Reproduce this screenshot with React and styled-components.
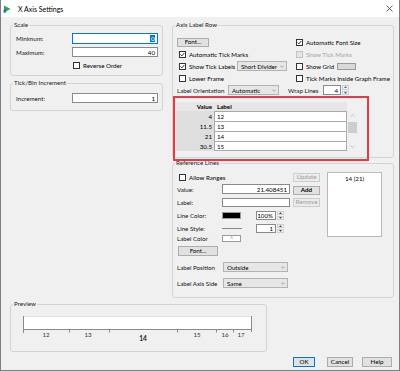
import React from "react";
import styled, { createGlobalStyle } from "styled-components";

const GlobalStyle = createGlobalStyle`
  html, body { margin: 0; padding: 0; background: #f0f0f0; }
  body { font-family: Lato, "Noto Sans", "Liberation Sans", sans-serif; font-size: 6.2px; color: #000; }
  #root { width: 400px; height: 371px; }
  *, *::before, *::after { box-sizing: border-box; }
`;

const Window = styled.div`
  position: relative;
  width: 400px;
  height: 371px;
  display: flex;
  flex-direction: column;
  background: #f0f0f0;
  border: 1px solid #7f7f7f;
  border-top: none;
  overflow: hidden;
`;

const TitleBar = styled.div`
  flex: none;
  height: 17px;
  background: #fff;
  display: flex;
  align-items: center;
  padding: 0 6px 0 2px;
`;

const TitleText = styled.span`
  margin-left: 7px;
  font-size: 7px;
  flex: 1;
`;

const Body = styled.div`
  flex: 1;
  display: flex;
  flex-direction: column;
  padding: 4px 5px 0 9px;
`;

const TopRow = styled.div`
  display: flex;
  align-items: flex-start;
  gap: 9px;
`;

const Column = styled.div`
  width: ${(p) => p.$w}px;
  display: flex;
  flex-direction: column;
  gap: ${(p) => p.$gap}px;
`;

const Group = styled.fieldset`
  margin: 0;
  min-width: 0;
  width: ${(p) => (p.$w ? `${p.$w}px` : "auto")};
  margin-top: ${(p) => p.$mt || 0}px;
  border: 1px solid #d4d4d4;
  border-radius: 3px;
  padding: ${(p) => `${p.$pt}px ${p.$pr}px ${p.$pb}px ${p.$pl}px`};
`;

const Legend = styled.legend`
  padding: 0 1px;
  margin-left: ${(p) => 2 - p.$pl}px;
  height: 8px;
  line-height: 8px;
  color: #1a1a1a;
`;

function GroupBox({ title, pt, pr, pb, pl, w, mt, children }) {
  return (
    <Group $pt={pt} $pr={pr} $pb={pb} $pl={pl} $w={w} $mt={mt}>
      <Legend $pl={pl}>{title}</Legend>
      {children}
    </Group>
  );
}

const Row = styled.div`
  display: flex;
  align-items: center;
  height: ${(p) => p.$h ?? 10}px;
  margin-top: ${(p) => p.$mt ?? 0}px;
  margin-left: ${(p) => p.$ml ?? 0}px;
`;

const FieldLabel = styled.span`
  flex: none;
  width: ${(p) => p.$w}px;
  margin-left: ${(p) => p.$ml ?? 0}px;
  white-space: nowrap;
  color: #111;
`;

const TextBox = styled.div`
  flex: none;
  width: ${(p) => p.$w}px;
  height: 100%;
  margin-left: ${(p) => p.$ml ?? 0}px;
  background: #fff;
  border: 1px solid ${(p) => (p.$focus ? "#0078d7" : "#8a8a8a")};
  display: flex;
  align-items: center;
  justify-content: ${(p) => (p.$left ? "flex-start" : "flex-end")};
  padding: 0 2px;
  white-space: nowrap;
`;

const Selected = styled.span`
  background: #0078d7;
  color: #fff;
  padding: 0 0.5px;
  line-height: 7px;
`;

const Box = styled.span`
  flex: none;
  width: 7px;
  height: 7px;
  border: 1px solid ${(p) => (p.$disabled ? "#c2c2c2" : "#333")};
  background: ${(p) => (p.$disabled ? "#e4e4e4" : "#fff")};
  display: flex;
  align-items: center;
  justify-content: center;
`;

const CheckWrap = styled.span`
  display: flex;
  align-items: center;
  gap: 3px;
  flex: none;
  width: ${(p) => (p.$w ? `${p.$w}px` : "auto")};
  margin-left: ${(p) => p.$ml ?? 0}px;
  color: ${(p) => (p.$disabled ? "#a3a3a3" : "#000")};
  white-space: nowrap;
`;

function Check({ checked, disabled, children, ml, w }) {
  return (
    <CheckWrap $disabled={disabled} $ml={ml} $w={w}>
      <Box $disabled={disabled}>
        {checked && (
          <svg width="5" height="5" viewBox="0 0 5 5">
            <path d="M0.6 2.6 L1.9 3.9 L4.4 0.9" fill="none" stroke="#222" strokeWidth="0.9" />
          </svg>
        )}
      </Box>
      {children}
    </CheckWrap>
  );
}

const Btn = styled.button`
  flex: none;
  width: ${(p) => p.$w}px;
  height: ${(p) => p.$h ?? 9}px;
  margin: 0;
  margin-left: ${(p) => p.$ml ?? 0}px;
  margin-top: ${(p) => p.$mt ?? 0}px;
  padding: 0;
  font: inherit;
  font-weight: ${(p) => (p.$bold ? 700 : 400)};
  line-height: 1;
  background: ${(p) => (p.$disabled ? "#ececec" : "#e1e1e1")};
  border: 1px solid ${(p) => (p.$default ? "#0078d7" : p.$disabled ? "#cdcdcd" : "#adadad")};
  color: ${(p) => (p.$disabled ? "#9e9e9e" : "#000")};
  display: flex;
  align-items: center;
  justify-content: center;
`;

const SelectBox = styled.div`
  flex: none;
  width: ${(p) => p.$w}px;
  height: ${(p) => p.$h ?? 10}px;
  margin-left: ${(p) => p.$ml ?? 0}px;
  background: #e6e6e6;
  border: 1px solid #b3b3b3;
  display: flex;
  align-items: center;
  justify-content: space-between;
  padding: 0 2px 0 3px;
  white-space: nowrap;
`;

function Select({ w, h, ml, children }) {
  return (
    <SelectBox $w={w} $h={h} $ml={ml}>
      <span>{children}</span>
      <svg width="4" height="3" viewBox="0 0 4 3">
        <path d="M0.3 0.6 L2 2.3 L3.7 0.6" fill="none" stroke="#777" strokeWidth="0.6" />
      </svg>
    </SelectBox>
  );
}

const SpinCol = styled.div`
  flex: none;
  width: 7px;
  height: 100%;
  display: flex;
  flex-direction: column;
  gap: 1px;
  margin-left: 1px;
`;

const SpinHalf = styled.div`
  flex: 1;
  background: #f4f4f4;
  border: 1px solid #cfcfcf;
  display: flex;
  align-items: center;
  justify-content: center;
`;

function Spinner({ color = "#555" }) {
  return (
    <SpinCol>
      <SpinHalf>
        <svg width="3" height="2" viewBox="0 0 3 2">
          <path d="M0 2 L1.5 0 L3 2 Z" fill={color} />
        </svg>
      </SpinHalf>
      <SpinHalf>
        <svg width="3" height="2" viewBox="0 0 3 2">
          <path d="M0 0 L1.5 2 L3 0 Z" fill={color} />
        </svg>
      </SpinHalf>
    </SpinCol>
  );
}

const Swatch = styled.div`
  flex: none;
  width: 19px;
  height: 7px;
  background: ${(p) => p.$bg};
  border: 1px solid #9a9a9a;
  margin-left: ${(p) => p.$ml ?? 0}px;
  display: flex;
  align-items: center;
  justify-content: center;
  color: #b0b0b0;
  font-size: 5.5px;
  line-height: 1;
`;

const LineSample = styled.div`
  flex: none;
  width: 20px;
  height: 0;
  border-top: 1px solid #8a8a8a;
`;

/* Axis label row */
const AxisGrid = styled.div`
  display: grid;
  grid-template-columns: 119px 1fr;
  grid-auto-rows: 10px;
  row-gap: 2px;
`;

const Cell = styled.div`
  display: flex;
  align-items: center;
  grid-column: ${(p) => (p.$span ? "1 / -1" : "auto")};
  margin-top: ${(p) => p.$mt ?? 0}px;
`;

const TableArea = styled.div`
  display: flex;
  margin-top: 7px;
  margin-left: -1px;
`;

const Table = styled.div`
  width: 171px;
  display: flex;
  flex-direction: column;
`;

const TRow = styled.div`
  display: grid;
  grid-template-columns: 38px 1fr;
  height: ${(p) => p.$h}px;
  background: ${(p) => (p.$head ? "#e6e6e6" : "#dedede")};
`;

const HeadCell = styled.div`
  display: flex;
  align-items: center;
  justify-content: ${(p) => (p.$right ? "flex-end" : "flex-start")};
  padding: ${(p) => (p.$right ? "0 2px 0 0" : "0 0 0 3px")};
  font-weight: 700;
`;

const ValCell = styled.div`
  display: flex;
  align-items: center;
  justify-content: flex-end;
  padding-right: 2px;
`;

const LabCell = styled.div`
  background: #fff;
  border: 1px solid #a9a9a9;
  border-bottom: ${(p) => (p.$last ? "1px solid #a9a9a9" : "none")};
  display: flex;
  align-items: center;
  padding-left: 2px;
`;

const Scrollbar = styled.div`
  width: 9px;
  margin-left: 1px;
  margin-top: 9px;
  height: 40px;
  background: #f0f0f0;
  display: flex;
  flex-direction: column;
`;

const ScrollArrow = styled.div`
  height: 9px;
  display: flex;
  align-items: center;
  justify-content: center;
`;

const ScrollTrack = styled.div`
  flex: 1;
  display: flex;
  flex-direction: column;
`;

const Thumb = styled.div`
  height: 11px;
  margin-top: 2px;
  background: #cdcdcd;
`;

/* Reference lines */
const RefTop = styled.div`
  display: flex;
  align-items: flex-start;
`;

const FormCol = styled.div`
  width: ${(p) => p.$w}px;
  display: flex;
  flex-direction: column;
`;

const BtnCol = styled.div`
  display: flex;
  flex-direction: column;
  margin-left: 3px;
`;

const ListBox = styled.div`
  width: 55px;
  height: 65px;
  margin-left: 7px;
  background: #fff;
  border: 1px solid #b9b9b9;
  text-align: center;
  padding-top: 2px;
  line-height: 8px;
`;

const BottomBar = styled.div`
  display: flex;
  justify-content: flex-end;
  margin-top: 5px;
  padding-right: 2px;
`;

const Highlight = styled.div`
  position: absolute;
  left: 172px;
  top: 96px;
  width: 196px;
  height: 65px;
  border: 2px solid #e63b46;
  pointer-events: none;
`;

function PreviewAxis() {
  const ticks = [46, 86, 154, 193, 210];
  const labels = [
    [23, "12"],
    [65, "13"],
    [174, "15"],
    [202, "16"],
    [218, "17"],
  ];
  return (
    <svg width="232" height="26" viewBox="0 0 232 26" style={{ display: "block" }}>
      <rect x="0" y="0" width="229" height="13.5" fill="#fff" />
      <line x1="0" y1="0.5" x2="229" y2="0.5" stroke="#e2e2e2" />
      <line x1="0.5" y1="0" x2="0.5" y2="17" stroke="#8a8a8a" />
      <line x1="228.5" y1="0" x2="228.5" y2="16" stroke="#8a8a8a" />
      <line x1="0" y1="13.5" x2="229" y2="13.5" stroke="#8a8a8a" />
      {ticks.map((t) => (
        <line key={t} x1={t + 0.5} y1="13" x2={t + 0.5} y2="16.5" stroke="#8a8a8a" />
      ))}
      {labels.map(([x, l]) => (
        <text key={l} x={x} y="20.5" textAnchor="middle" fontSize="6.2" fill="#333" fontFamily="Lato, sans-serif">
          {l}
        </text>
      ))}
      <text x="120" y="24.5" textAnchor="middle" fontSize="6.6" fontWeight="700" fill="#222" fontFamily="Lato, sans-serif">
        14
      </text>
    </svg>
  );
}

export default function App() {
  const rows = [
    ["4", "12"],
    ["11.5", "13"],
    ["21", "14"],
    ["30.5", "15"],
  ];
  return (
    <>
      <GlobalStyle />
      <Window>
        <TitleBar>
          <svg width="8" height="8" viewBox="0 0 8 8">
            <path d="M1 0.5 L7.6 4 L1 7.5 Z" fill="#2ea84e" />
            <rect x="0.5" y="4.6" width="2.6" height="3" fill="#1f6fd1" />
          </svg>
          <TitleText>X Axis Settings</TitleText>
          <svg width="7" height="7" viewBox="0 0 7 7">
            <path d="M0.5 0.5 L6.5 6.5 M6.5 0.5 L0.5 6.5" stroke="#222" strokeWidth="0.7" />
          </svg>
        </TitleBar>
        <Body>
          <TopRow>
            <Column $w={153} $gap={3}>
              <GroupBox title="Scale" pt={4} pr={4} pb={6} pl={5}>
                <Row $h={11}>
                  <FieldLabel $w={56}>Minimum:</FieldLabel>
                  <TextBox $w={86} $focus>
                    <Selected>0</Selected>
                  </TextBox>
                </Row>
                <Row $h={10} $mt={3}>
                  <FieldLabel $w={56}>Maximum:</FieldLabel>
                  <TextBox $w={86}>40</TextBox>
                </Row>
                <Row $h={8} $mt={4}>
                  <Check ml={57}>Reverse Order</Check>
                </Row>
              </GroupBox>
              <GroupBox title="Tick/Bin Increment" pt={6} pr={4} pb={7} pl={5}>
                <Row $h={10}>
                  <FieldLabel $w={56}>Increment:</FieldLabel>
                  <TextBox $w={86}>1</TextBox>
                </Row>
              </GroupBox>
            </Column>
            <Column $w={222} $gap={1}>
              <GroupBox title="Axis Label Row" pt={8} pr={4} pb={6} pl={4}>
                <AxisGrid>
                  <Cell>
                    <Btn $w={32} $h={9}>Font...</Btn>
                  </Cell>
                  <Cell>
                    <Check checked>Automatic Font Size</Check>
                  </Cell>
                  <Cell>
                    <Check checked ml={2}>Automatic Tick Marks</Check>
                  </Cell>
                  <Cell>
                    <Check disabled>Show Tick Marks</Check>
                  </Cell>
                  <Cell>
                    <Check checked ml={2} w={58}>Show Tick Labels</Check>
                    <Select w={50}>Short Divider</Select>
                  </Cell>
                  <Cell>
                    <Check w={41}>Show Grid</Check>
                    <Swatch $bg="#d9d9d9" />
                  </Cell>
                  <Cell>
                    <Check ml={2}>Lower Frame</Check>
                  </Cell>
                  <Cell>
                    <Check>Tick Marks Inside Graph Frame</Check>
                  </Cell>
                  <Cell $span>
                    <FieldLabel $w={51}>Label Orientation</FieldLabel>
                    <Select w={51}>Automatic</Select>
                    <FieldLabel $w={35} $ml={9}>Wrap Lines</FieldLabel>
                    <TextBox $w={18}>4</TextBox>
                    <Spinner color="#2a6fc9" />
                  </Cell>
                </AxisGrid>
                <TableArea>
                  <Table>
                    <TRow $head $h={9}>
                      <HeadCell $right>Value</HeadCell>
                      <HeadCell>Label</HeadCell>
                    </TRow>
                    {rows.map(([v, l], i) => (
                      <TRow key={v} $h={10}>
                        <ValCell>{v}</ValCell>
                        <LabCell $last={i === rows.length - 1}>{l}</LabCell>
                      </TRow>
                    ))}
                  </Table>
                  <Scrollbar>
                    <ScrollArrow>
                      <svg width="5" height="3" viewBox="0 0 5 3">
                        <path d="M0.5 2.5 L2.5 0.5 L4.5 2.5" fill="none" stroke="#a6a6a6" strokeWidth="0.6" />
                      </svg>
                    </ScrollArrow>
                    <ScrollTrack>
                      <Thumb />
                    </ScrollTrack>
                    <ScrollArrow>
                      <svg width="5" height="3" viewBox="0 0 5 3">
                        <path d="M0.5 0.5 L2.5 2.5 L4.5 0.5" fill="none" stroke="#a6a6a6" strokeWidth="0.6" />
                      </svg>
                    </ScrollArrow>
                  </Scrollbar>
                </TableArea>
              </GroupBox>
              <GroupBox title="Reference Lines" pt={5} pr={11} pb={9} pl={4}>
                <RefTop>
                  <FormCol $w={113}>
                    <Row $h={10}>
                      <Check ml={2}>Allow Ranges</Check>
                    </Row>
                    <Row $h={10} $mt={2}>
                      <FieldLabel $w={45}>Value:</FieldLabel>
                      <TextBox $w={68}>21.408451</TextBox>
                    </Row>
                    <Row $h={9} $mt={4}>
                      <FieldLabel $w={45}>Label:</FieldLabel>
                      <TextBox $w={68} />
                    </Row>
                    <Row $h={9} $mt={4}>
                      <FieldLabel $w={45}>Line Color:</FieldLabel>
                      <Swatch $bg="#000" />
                      <TextBox $w={20} $ml={15}>100%</TextBox>
                      <Spinner />
                    </Row>
                    <Row $h={9} $mt={4}>
                      <FieldLabel $w={45}>Line Style:</FieldLabel>
                      <LineSample />
                      <TextBox $w={20} $ml={14}>1</TextBox>
                      <Spinner />
                    </Row>
                    <Row $h={8} $mt={1}>
                      <FieldLabel $w={45}>Label Color</FieldLabel>
                      <Swatch $bg="#fff">X</Swatch>
                    </Row>
                    <Row $h={10} $mt={4}>
                      <Btn $w={40} $h={10} $ml={1}>Font...</Btn>
                    </Row>
                    <Row $h={10} $mt={6}>
                      <FieldLabel $w={46}>Label Position</FieldLabel>
                      <Select w={65}>Outside</Select>
                    </Row>
                    <Row $h={10} $mt={6}>
                      <FieldLabel $w={46}>Label Axis Side</FieldLabel>
                      <Select w={65}>Same</Select>
                    </Row>
                  </FormCol>
                  <BtnCol>
                    <Btn $w={27} $mt={1} $disabled>Update</Btn>
                    <Btn $w={27} $mt={4} $bold>Add</Btn>
                    <Btn $w={27} $mt={3} $disabled>Remove</Btn>
                  </BtnCol>
                  <ListBox>14 (21)</ListBox>
                </RefTop>
              </GroupBox>
            </Column>
          </TopRow>
          <GroupBox title="Preview" pt={8} pr={12} pb={9} pl={12} w={257} mt={2}>
            <PreviewAxis />
          </GroupBox>
          <BottomBar>
            <Btn $w={22} $h={10} $default>OK</Btn>
            <Btn $w={26} $h={10} $ml={12}>Cancel</Btn>
            <Btn $w={30} $h={10} $ml={9}>Help</Btn>
          </BottomBar>
        </Body>
        <Highlight />
      </Window>
    </>
  );
}
